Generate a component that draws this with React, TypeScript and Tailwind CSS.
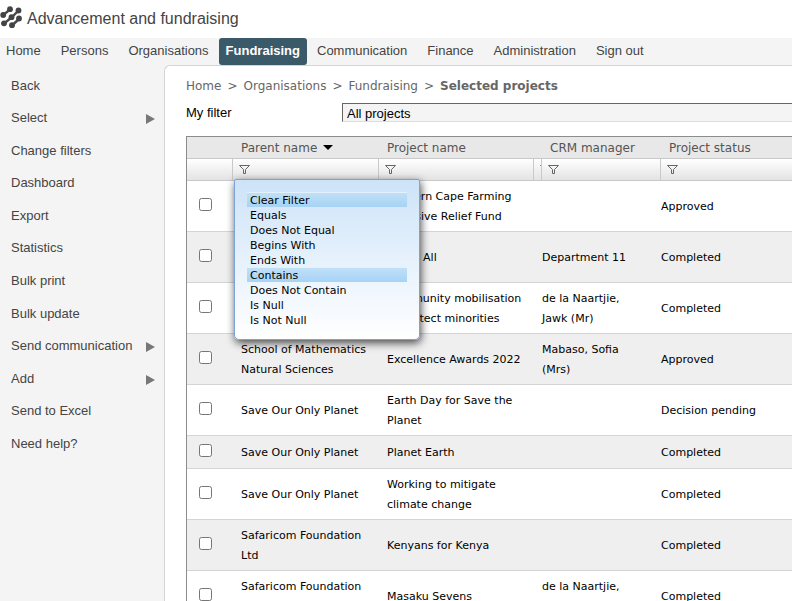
import type { ReactNode } from "react";

const nav = ["Home", "Persons", "Organisations", "Fundraising", "Communication", "Finance", "Administration", "Sign out"];

const side: { label: string; sub?: boolean }[] = [
  { label: "Back" },
  { label: "Select", sub: true },
  { label: "Change filters" },
  { label: "Dashboard" },
  { label: "Export" },
  { label: "Statistics" },
  { label: "Bulk print" },
  { label: "Bulk update" },
  { label: "Send communication", sub: true },
  { label: "Add", sub: true },
  { label: "Send to Excel" },
  { label: "Need help?" },
];

const filters = ["Clear Filter", "Equals", "Does Not Equal", "Begins With", "Ends With", "Contains", "Does Not Contain", "Is Null", "Is Not Null"];

const rows: [string, string, string, string][] = [
  ["Rural Development", "Western Cape Farming Intensive Relief Fund", "", "Approved"],
  ["Rural Development Foundation Trust", "Arts 4 All", "Department 11", "Completed"],
  ["Rural Development", "Community mobilisation to protect minorities", "de la Naartjie, Jawk (Mr)", "Completed"],
  ["School of Mathematics Natural Sciences", "Excellence Awards 2022", "Mabaso, Sofia (Mrs)", "Approved"],
  ["Save Our Only Planet", "Earth Day for Save the Planet", "", "Decision pending"],
  ["Save Our Only Planet", "Planet Earth", "", "Completed"],
  ["Save Our Only Planet", "Working to mitigate climate change", "", "Completed"],
  ["Safaricom Foundation Ltd", "Kenyans for Kenya", "", "Completed"],
  ["Safaricom Foundation Ltd", "Masaku Sevens", "de la Naartjie, Jawk (Mr)", "Completed"],
];

function Logo() {
  return (
    <svg width="22" height="26" viewBox="0 0 22 26" className="shrink-0" aria-hidden="true">
      <path
        d="M3.2 8.5 L10 3 M18.5 4 L11.5 11 L4 17 M12 19 L19.5 12"
        transform="translate(0 0.5)"
        fill="none"
        stroke="#4a4a4a"
        strokeWidth="2.4"
      />
      <g fill="#444">
        <circle cx="3.2" cy="9" r="2.9" />
        <circle cx="10" cy="3.2" r="2.9" />
        <circle cx="18.5" cy="4.5" r="2.9" />
        <circle cx="11.5" cy="11.2" r="2.9" />
        <circle cx="4" cy="17.3" r="2.9" />
        <circle cx="12" cy="19.2" r="2.9" />
        <circle cx="19" cy="12.5" r="2.9" />
      </g>
    </svg>
  );
}

function Funnel() {
  return (
    <svg width="12" height="10" viewBox="0 0 12 10" fill="none" stroke="#666" aria-hidden="true" className="max-w-none">
      <path d="M0.5 0.5 H10.5 L6.5 4.5 V8.5 H4.5 V4.5 Z" />
    </svg>
  );
}

function FilterCell({ children }: { children?: ReactNode }) {
  return (
    <td className="relative h-[22px] border-r border-b border-[#c9c9c9] p-0 pl-[6px] align-middle last:border-r-0">
      <button type="button" aria-label="Filter" className="block max-w-full overflow-hidden">
        <Funnel />
      </button>
      {children}
    </td>
  );
}

function FilterMenu() {
  return (
    <div className="absolute top-[20px] left-px z-10 w-[186px] rounded-b-[5px] rounded-t-[2px] border border-[#7da2d6] bg-linear-to-b from-[#cde3f8] to-white px-3 pt-3 pb-3 shadow-[1px_3px_8px_rgba(0,0,0,0.7)]">
      <ul>
        {filters.map((f) => (
          <li key={f}>
            <button
              type="button"
              className={`block h-[15px] w-full border-t pl-[3px] text-left text-[11px] leading-4 text-black ${
                f === "Clear Filter" || f === "Contains" ? "border-[#e4f1fc] bg-linear-to-b from-[#c0e0f8] to-[#a6d3f5]" : "border-transparent"
              }`}
            >
              {f}
            </button>
          </li>
        ))}
      </ul>
    </div>
  );
}

export default function App() {
  return (
    <div className="flex h-screen flex-col overflow-hidden bg-[#f4f4f4] font-['Liberation_Sans',Arial,sans-serif] text-[13px] text-[#444]">
      <header className="flex h-[38px] shrink-0 items-center gap-[5px] bg-white">
        <Logo />
        <h1 className="text-base text-[#444]">Advancement and fundraising</h1>
      </header>
      <nav className="flex h-[27px] shrink-0 whitespace-nowrap">
        {nav.map((n) => (
          <a
            key={n}
            href="#"
            className={
              n === "Fundraising"
                ? "rounded-[3px] bg-[#3a5a6a] px-[7px] leading-[25px] font-bold text-white"
                : "px-[10px] leading-[25px] first:pl-[6px]"
            }
          >
            {n}
          </a>
        ))}
      </nav>
      <div className="flex min-h-0 flex-1">
        <aside className="w-[164px] shrink-0 pt-[4px]">
          <ul className="grid h-[391px] auto-rows-fr">
            {side.map((s) => (
              <li key={s.label}>
                <a href="#" className="flex h-full items-center justify-between pr-[9px] pl-[11px]">
                  {s.label}
                  {s.sub && (
                    <svg width="9" height="10" viewBox="0 0 9 10" className="mt-[3px]" aria-hidden="true">
                      <path d="M0 0 L9 5 L0 10 Z" fill="#777" />
                    </svg>
                  )}
                </a>
              </li>
            ))}
          </ul>
        </aside>
        <main className="min-w-0 flex-1 overflow-hidden rounded-tl-[6px] border-t border-l border-[#d4d4d4] bg-white pl-[21px]">
          <div className="mt-[10px] flex gap-[6px] font-['DejaVu_Sans',sans-serif] text-xs leading-5 whitespace-nowrap text-[#666]">
            <a href="#">Home</a>
            <span>&gt;</span>
            <a href="#">Organisations</a>
            <span>&gt;</span>
            <a href="#">Fundraising</a>
            <span>&gt;</span>
            <b>Selected projects</b>
          </div>
          <div className="mt-[7px] flex items-center text-black">
            <label htmlFor="filter" className="w-[156px] shrink-0 leading-[19px]">
              My filter
            </label>
            <select id="filter" className="h-[19px] min-w-0 flex-1 appearance-none border-t border-b border-l border-t-[#666] border-b-[#ddd] border-l-[#666] bg-[#f4f4f4] pl-1">
              <option>All projects</option>
            </select>
          </div>
          <table className="mt-[14px] w-full table-fixed border-separate border-spacing-0 border-t border-l border-[#8c8c8c] font-['DejaVu_Sans',sans-serif] text-[11px] leading-5 text-black">
            <colgroup>
              <col className="w-[46px]" />
              <col className="w-[146px]" />
              <col className="w-[155px]" />
              <col className="w-[8px]" />
              <col className="w-[119px]" />
              <col />
            </colgroup>
            <thead>
              <tr className="bg-[#e8e8e8] text-left text-xs leading-5 whitespace-nowrap text-[#555]">
                <td className="h-[22px] border-b border-[#c9c9c9] p-0" />
                <th className="border-b border-[#c9c9c9] p-0 pl-2 font-normal">
                  <span className="flex items-center gap-[6px]">
                    Parent name
                    <svg width="10" height="5" viewBox="0 0 10 5" aria-hidden="true">
                      <path d="M0 0 H10 L5 5 Z" fill="#000" />
                    </svg>
                  </span>
                </th>
                <th className="border-b border-[#c9c9c9] p-0 pl-2 font-normal">Project name</th>
                <td className="border-b border-[#c9c9c9] p-0" />
                <th className="border-b border-[#c9c9c9] p-0 pl-2 font-normal">CRM manager</th>
                <th className="border-b border-[#c9c9c9] p-0 pl-2 font-normal">Project status</th>
              </tr>
              <tr className="bg-linear-to-b from-white to-[#e2e2e2]">
                <td className="border-r border-b border-[#c9c9c9] p-0" />
                <FilterCell>
                  <FilterMenu />
                </FilterCell>
                <FilterCell />
                <FilterCell />
                <FilterCell />
                <FilterCell />
              </tr>
            </thead>
            <tbody>
              {rows.map((r, i) => (
                <tr key={i} className="odd:bg-white even:bg-[#efefef]">
                  <td className="h-[33px] border-b border-[#d4d4d4] p-0 pl-3 align-middle">
                    <input type="checkbox" aria-label={`Select ${r[1]}`} className="mb-[3px] block size-[13px]" />
                  </td>
                  <td className="border-b border-[#d4d4d4] pt-[6px] pr-2 pb-[4px] pl-2">{r[0]}</td>
                  <td className="border-b border-[#d4d4d4] pt-[6px] pr-2 pb-[4px] pl-2">{r[1]}</td>
                  <td className="border-b border-[#d4d4d4] p-0" />
                  <td className="border-b border-[#d4d4d4] pt-[6px] pr-4 pb-[4px] pl-0">{r[2]}</td>
                  <td className="border-b border-[#d4d4d4] pt-[6px] pb-[4px] pl-0">{r[3]}</td>
                </tr>
              ))}
            </tbody>
          </table>
        </main>
      </div>
    </div>
  );
}
